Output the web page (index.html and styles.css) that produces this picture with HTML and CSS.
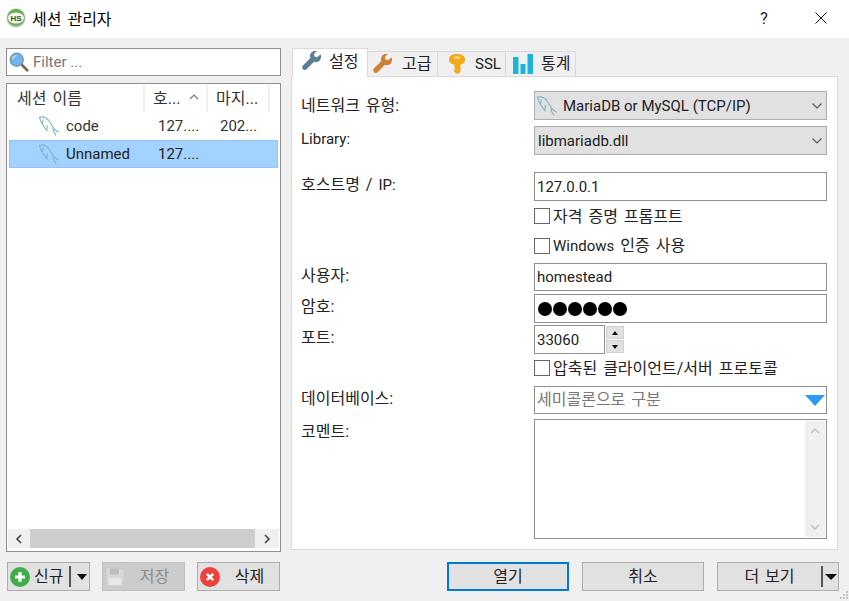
FILE: index.html
```html
<!DOCTYPE html>
<html lang="ko">
<head>
<meta charset="utf-8">
<title>세션 관리자</title>
<link rel="stylesheet" href="styles.css">
</head>
<body>
<svg class="defs" width="0" height="0" aria-hidden="true">
  <defs>
    <symbol id="dolphin" viewBox="0 0 20 20">
      <path d="M.5 1.200C4 .2 8 2 10.500 5.500c1.700 2.400 2.800 5 4.200 6.800 1.200 1.400 2.800 2.600 4.600 3.700M.5 1.200C1 4 2 6.500 3.500 8.500c1.300 2 3 4.300 4.500 6.300M3.500 8.500C3.300 6.500 3.600 5 4.500 3.700M8 14.800c-.2-1.800-.1-3.500.5-5M14.200 12c-.3 1.500 0 3 1 4.300.8 1 1.300 1.900 1.500 3" fill="none" stroke="#7fb5c4" stroke-width="1.100" stroke-linecap="round" stroke-linejoin="round"/>
    </symbol>
    <symbol id="wrench" viewBox="0 0 20 20">
      <path d="M18.500 3.200l-3.300 3-2.600-.7-.7-2.600 3-3C12.600-.7 10 .4 8.800 2.300c-1 1.500-1 3.200-.4 4.700L.9 14.500c-1 1-1 2.600 0 3.700 1 1.100 2.700 1 3.700 0L12 10.700c1.600.7 3.400.5 4.900-.5 1.900-1.300 2.800-4.300 1.600-7z"/>
    </symbol>
  </defs>
</svg>
<div class="window">
  <header class="titlebar">
    <svg class="app-icon" viewBox="0 0 20 20" aria-hidden="true">
      <circle cx="10" cy="10" r="9.500" fill="#b9c2b5"/>
      <circle cx="10" cy="9.500" r="8.500" fill="#6aaf50"/>
      <ellipse cx="10" cy="10" rx="8" ry="5.500" fill="#f4f4ef"/>
      <text x="10" y="13" class="app-icon-text" text-anchor="middle">HS</text>
    </svg>
    <span class="title">세션 관리자</span>
    <span class="help">?</span>
    <svg class="close" viewBox="0 0 12 12" aria-hidden="true"><path d="M.5.500l11 11M11.500.500l-11 11" stroke="#111" stroke-width="1" fill="none"/></svg>
  </header>

  <main class="content">
    <section class="left">
      <div class="filter">
        <svg class="search" viewBox="0 0 22 22" aria-hidden="true">
          <path d="M13.500 13.500l6.500 6.500" stroke="#6f6a60" stroke-width="3" stroke-linecap="round"/>
          <circle cx="8.500" cy="8.500" r="7" fill="#6bb7f2" stroke="#7f98a8" stroke-width="1.800"/>
          <path d="M4 8a4.500 4.500 0 0 1 4-4" stroke="#b9e0fb" stroke-width="1.500" fill="none"/>
        </svg>
        <span class="filter-text">Filter ...</span>
      </div>
      <div class="tree">
        <div class="tree-head">
          <span class="col col-name ko">세션 이름</span>
          <span class="col col-host ko">호...<svg class="sort" viewBox="0 0 10 6" aria-hidden="true"><path d="M1 5l4-4 4 4" fill="none" stroke="#777" stroke-width="1.200"/></svg></span>
          <span class="col col-last ko">마지...</span>
        </div>
        <div class="tree-row">
          <svg class="tree-icon"><use href="#dolphin"/></svg>
          <span class="cell-name">code</span><span class="cell-host">127....</span><span class="cell-last">202...</span>
        </div>
        <div class="tree-row selected">
          <svg class="tree-icon"><use href="#dolphin"/></svg>
          <span class="cell-name">Unnamed</span><span class="cell-host">127....</span>
        </div>
        <div class="tree-fill"></div>
        <div class="hscroll">
          <div class="scroll-btn scroll-btn-left"><svg class="scroll-arrow" viewBox="0 0 8 10" aria-hidden="true"><path d="M6 1L2 5l4 4" fill="none" stroke="#444" stroke-width="1.600"/></svg></div>
          <div class="hscroll-thumb"></div>
          <div class="scroll-btn scroll-btn-right"><svg class="scroll-arrow" viewBox="0 0 8 10" aria-hidden="true"><path d="M2 1l4 4-4 4" fill="none" stroke="#444" stroke-width="1.600"/></svg></div>
        </div>
      </div>
    </section>

    <section class="right">
      <nav class="tabs">
        <div class="tab active">
          <svg class="tab-icon wrench-blue"><use href="#wrench"/></svg><span class="ko">설정</span>
        </div>
        <div class="tab tab-adv">
          <svg class="tab-icon wrench-orange"><use href="#wrench"/></svg><span class="ko">고급</span>
        </div>
        <div class="tab tab-ssl">
          <svg class="tab-icon" viewBox="0 0 20 20" aria-hidden="true">
            <path d="M10 0c4.500 0 8 1.500 8 5.500 0 3.500-2.500 4.800-4.500 5.300V18l-3.500 2-3-2.500V16l1.200-1.200L7.500 13.500v-2.700C5 10.300 2 9 2 5.500 2 1.500 5.500 0 10 0z" fill="#f4a81c"/>
            <rect x="7" y="2.500" width="6" height="2.200" rx="1.100" fill="#ffe08a"/>
          </svg><span>SSL</span>
        </div>
        <div class="tab tab-stats">
          <svg class="tab-icon" viewBox="0 0 20 20" aria-hidden="true">
            <rect x="0" y="3" width="5.500" height="17" fill="#1cb5d8"/>
            <rect x="7.500" y="10" width="5" height="10" fill="#1cb5d8"/>
            <rect x="14.500" y="0" width="5.500" height="20" fill="#1cb5d8"/>
          </svg><span class="ko">통계</span>
        </div>
      </nav>
      <div class="panel">
        <div class="form">
          <label class="lbl ko row-net">네트워크 유형:</label>
          <div class="combo row-net">
            <svg class="combo-icon"><use href="#dolphin"/></svg>
            <span class="combo-text">MariaDB or MySQL (TCP/IP)</span>
            <svg class="chev" viewBox="0 0 10 6" aria-hidden="true"><path d="M.5.500L5 5 9.500.500" fill="none" stroke="#555" stroke-width="1.100"/></svg>
          </div>

          <label class="lbl row-lib">Library:</label>
          <div class="combo row-lib">
            <span class="combo-text">libmariadb.dll</span>
            <svg class="chev" viewBox="0 0 10 6" aria-hidden="true"><path d="M.5.500L5 5 9.500.500" fill="none" stroke="#555" stroke-width="1.100"/></svg>
          </div>

          <label class="lbl ko row-host">호스트명 / <span class="lat">IP:</span></label>
          <div class="input row-host">127.0.0.1</div>

          <div class="check ko row-c1"><span class="box"></span><span class="check-text">자격 증명 프롬프트</span></div>
          <div class="check ko row-c2"><span class="box"></span><span class="check-text"><span class="lat">Windows</span> 인증 사용</span></div>

          <label class="lbl ko row-user">사용자:</label>
          <div class="input row-user">homestead</div>

          <label class="lbl ko row-pass">암호:</label>
          <div class="input row-pass pass"><i></i><i></i><i></i><i></i><i></i><i></i></div>

          <label class="lbl ko row-port">포트:</label>
          <div class="port row-port">
            <div class="input port-input">33060</div>
            <div class="spin">
              <span class="spin-btn"><b class="tri-up"></b></span>
              <span class="spin-btn"><b class="tri-down"></b></span>
            </div>
          </div>

          <div class="check ko row-c3"><span class="box"></span><span class="check-text">압축된 클라이언트/서버 프로토콜</span></div>

          <label class="lbl ko row-db">데이터베이스:</label>
          <div class="input row-db db"><span class="ko db-text">세미콜론으로 구분</span><b class="db-arrow"></b></div>

          <label class="lbl ko row-comment">코멘트:</label>
          <div class="input row-comment memo">
            <div class="vscroll">
              <svg viewBox="0 0 10 6" aria-hidden="true"><path d="M1 5l4-4 4 4" fill="none" stroke="#c4c4c4" stroke-width="1.600"/></svg>
              <svg viewBox="0 0 10 6" aria-hidden="true"><path d="M1 1l4 4 4-4" fill="none" stroke="#c4c4c4" stroke-width="1.600"/></svg>
            </div>
          </div>
        </div>
      </div>
    </section>
  </main>

  <footer class="buttons">
    <div class="btn-group-left">
      <div class="btn btn-new">
        <svg class="btn-icon" viewBox="0 0 20 20" aria-hidden="true">
          <circle cx="10" cy="10" r="10" fill="#3fae49"/>
          <path d="M10 5v10M5 10h10" stroke="#fff" stroke-width="3.200"/>
        </svg>
        <span class="ko btn-text">신규</span>
        <span class="split"></span><b class="tri-down big"></b>
      </div>
      <div class="btn btn-save disabled">
        <svg class="btn-icon" viewBox="0 0 20 20" aria-hidden="true">
          <path d="M1 1h15l3 3v15H1z" fill="#d8d8d8" stroke="#c8c8c8"/>
          <rect x="5" y="1.500" width="9" height="6" fill="#bdbdbd"/>
          <rect x="4" y="11" width="12" height="7" fill="#e8e8e8"/>
        </svg>
        <span class="btn-label ko btn-text">저장</span>
      </div>
      <div class="btn btn-del">
        <svg class="btn-icon" viewBox="0 0 20 20" aria-hidden="true">
          <circle cx="10" cy="10" r="10" fill="#f0403c"/>
          <path d="M6.800 6.800l6.400 6.400M13.200 6.800l-6.400 6.400" stroke="#fff" stroke-width="2.600"/>
        </svg>
        <span class="btn-label ko btn-text">삭제</span>
      </div>
    </div>
    <div class="btn-group-right">
      <div class="btn wide default"><span class="ko btn-text">열기</span></div>
      <div class="btn wide"><span class="ko btn-text">취소</span></div>
      <div class="btn wide more"><span class="btn-label ko btn-text">더 보기</span><span class="split"></span><b class="tri-down big"></b></div>
    </div>
  </footer>
  <svg class="grip" viewBox="0 0 10 10" aria-hidden="true"><path d="M7 1h2v2H7zM4 4h2v2H4zM7 4h2v2H7zM1 7h2v2H1zM4 7h2v2H4zM7 7h2v2H7z" fill="#c4c4c4"/></svg>
</div>
</body>
</html>
```
FILE: styles.css
```css
* { box-sizing: border-box; }

html, body {
  margin: 0;
  padding: 0;
  height: 100%;
  overflow: hidden;
}

body {
  font-family: Roboto, "Noto Sans CJK KR", sans-serif;
  font-size: 15px;
  color: #1e1e1e;
  background: #f0f0f0;
}

.ko { font-size: 16px; word-spacing: 2px; white-space: nowrap; }
.lat { font-size: 15px; }

.defs { position: absolute; }

.window {
  position: relative;
  width: 849px;
  height: 601px;
  display: flex;
  flex-direction: column;
}

.titlebar {
  height: 38px;
  flex: none;
  background: #fff;
  display: flex;
  align-items: center;
  padding: 0 0 2px 6px;
}

.app-icon { width: 20px; height: 20px; margin-right: 6px; flex: none; }
.app-icon-text { font: bold 8px "Liberation Sans", sans-serif; fill: #2d5a2a; }
.title { font-size: 16px; color: #000; word-spacing: 2px; }
.help { margin-left: auto; width: 16px; font-size: 16px; color: #222; text-align: center; }
.close { width: 12px; height: 12px; margin: 0 22px 0 43px; }

.content {
  flex: none;
  height: 514px;
  padding: 10px 11px 0 6px;
  display: flex;
  gap: 10px;
}

.left {
  width: 275px;
  display: flex;
  flex-direction: column;
  gap: 7px;
}

.filter {
  height: 28px;
  flex: none;
  background: #fff;
  border: 1px solid #8f8f8f;
  display: flex;
  align-items: center;
  padding-left: 2px;
  padding-bottom: 1px;
}
.search { width: 20px; height: 20px; margin-right: 4px; }
.filter-text { color: #777; }

.tree {
  flex: 1;
  min-height: 0;
  background: #fff;
  border: 1px solid #8f8f8f;
  padding: 1px;
  display: flex;
  flex-direction: column;
}

.tree-head {
  height: 27px;
  display: flex;
  flex: none;
  color: #333;
}
.col {
  display: flex;
  align-items: center;
  border-right: 2px solid #f0f0f0;
  padding-bottom: 3px;
}
.col-name { width: 137px; padding-left: 9px; }
.col-host { width: 63px; padding-left: 8px; }
.col-last { width: 62px; padding-left: 8px; }
.sort { width: 10px; height: 6px; margin-left: 9px; }

.tree-row {
  height: 28px;
  margin: 0 1px;
  display: flex;
  align-items: center;
  flex: none;
  border: 1px solid transparent;
  color: #333;
}
.tree-row.selected {
  background: #a2d2fd;
  border-color: #8fc6f5;
  color: #222;
}
.tree-icon { width: 20px; height: 20px; margin-left: 29px; margin-right: 7px; flex: none; }
.cell-name { width: 92px; }
.cell-host { width: 62px; }

.tree-fill { flex: 1; }

.hscroll {
  height: 19px;
  margin-bottom: 2px;
  flex: none;
  background: #f0f0f0;
  display: flex;
  align-items: center;
}
.scroll-btn { height: 100%; display: flex; align-items: center; justify-content: center; flex: none; }
.scroll-btn-left { width: 22px; }
.scroll-btn-right { width: 24px; }
.scroll-arrow { width: 8px; height: 10px; }
.hscroll-thumb { flex: 1; height: 100%; background: #cdcdcd; }

.right {
  width: 547px;
  height: 502px;
  display: flex;
  flex-direction: column;
}

.tabs {
  display: flex;
  align-items: flex-end;
  height: 29px;
  flex: none;
  padding-left: 1px;
  position: relative;
  z-index: 1;
  margin-bottom: -1px;
}

.tab {
  height: 26px;
  padding: 0 0 1px 5px;
  display: flex;
  align-items: center;
  gap: 9px;
  background: #f0f0f0;
  border: 1px solid #d9d9d9;
  border-left: 0;
  color: #222;
}
.tab .ko { padding-bottom: 3px; }
.tab.active {
  width: 76px;
  height: 29px;
  background: #fff;
  border: 1px solid #d9d9d9;
  border-bottom: 0;
  padding: 0 0 4px 9px;
  gap: 7px;
}
.tab-adv { width: 70px; }
.tab-ssl { width: 68px; padding-left: 9px; gap: 8px; }
.tab-stats { width: 70px; padding-left: 7px; gap: 8px; }
.tab-icon { width: 20px; height: 20px; flex: none; }
.wrench-blue { fill: #5d7f93; }
.wrench-orange { fill: #cf7f2f; }

.panel {
  flex: 1;
  min-height: 0;
  background: #fff;
  border: 1px solid #d9d9d9;
  padding: 14px 10px 0 9px;
}

.form {
  display: grid;
  grid-template-columns: 233px 293px;
  grid-template-rows: 29px 6px 29px 17px 29px 30px 29px 3px 28px 3px 29px 2px 29px 28px 4px 28px 5px 120px;
  align-items: center;
}

.lbl { grid-column: 1; color: #222; align-self: start; line-height: 24px; padding-top: 1px; }
.lbl.row-net { padding-top: 3px; }
.lbl.row-lib { padding-top: 1px; }

.row-net { grid-row: 1; }
.row-lib { grid-row: 3; }
.row-host { grid-row: 5; }
.row-c1 { grid-row: 6; grid-column: 2; }
.row-c2 { grid-row: 7; grid-column: 2; }
.row-user { grid-row: 9; }
.row-pass { grid-row: 11; }
.row-port { grid-row: 13; }
.row-c3 { grid-row: 14; grid-column: 2; }
.row-db { grid-row: 16; }
.row-comment { grid-row: 18; }

.combo {
  grid-column: 2;
  height: 100%;
  background: #e1e1e1;
  border: 1px solid #adadad;
  display: flex;
  align-items: center;
  padding: 0 4px 0 2px;
  color: #222;
}
.combo-icon { width: 20px; height: 20px; margin-right: 6px; flex: none; }
.combo-text { flex: 1; }
.row-lib .combo-text { padding-left: 1px; }
.chev { width: 10px; height: 6px; flex: none; }

.input {
  grid-column: 2;
  height: 100%;
  background: #fff;
  border: 1px solid #8f8f8f;
  display: flex;
  align-items: center;
  padding-left: 2px;
  color: #222;
}

.pass { gap: 1px; padding-left: 3px; }
.pass i { width: 14px; height: 14px; border-radius: 50%; background: #000; }

.port { grid-column: 2; height: 100%; display: flex; }
.port-input { width: 71px; }
.spin { display: flex; flex-direction: column; gap: 1px; margin-left: 1px; padding-top: 1px; }
.spin-btn {
  width: 18px;
  height: 13px;
  background: #e1e1e1;
  border: 1px solid #d0d0d0;
  display: flex;
  align-items: center;
  justify-content: center;
}

.tri-up, .tri-down {
  display: block;
  width: 0;
  height: 0;
  border-left: 3.500px solid transparent;
  border-right: 3.500px solid transparent;
}
.tri-up { border-bottom: 4px solid #111; }
.tri-down { border-top: 4px solid #111; }
.tri-down.big { border-left-width: 6px; border-right-width: 6px; border-top-width: 6px; flex: none; }

.check { display: flex; align-items: center; gap: 3px; color: #222; }
.check-text { padding-bottom: 3px; }
.box { width: 16px; height: 16px; background: #fff; border: 1px solid #666; flex: none; }

.db { justify-content: space-between; padding-right: 1px; color: #777; }
.db-text { padding-bottom: 4px; }
.db-arrow {
  width: 0;
  height: 0;
  border-left: 10px solid transparent;
  border-right: 10px solid transparent;
  border-top: 11px solid #2b9af3;
  flex: none;
}

.memo { height: 120px; align-items: stretch; justify-content: flex-end; padding: 1px; }
.vscroll {
  width: 20px;
  background: #f0f0f0;
  display: flex;
  flex-direction: column;
  justify-content: space-between;
  align-items: center;
  padding: 7px 0;
}
.vscroll svg { width: 10px; height: 6px; }

.buttons {
  flex: none;
  padding: 10px 10px 0 7px;
  display: flex;
  justify-content: space-between;
}

.btn-group-left { display: flex; gap: 12px; }
.btn-group-right { display: flex; gap: 13px; }

.btn {
  height: 29px;
  background: #e1e1e1;
  border: 1px solid #adadad;
  display: flex;
  align-items: center;
  justify-content: center;
  color: #222;
}
.btn-text { padding-bottom: 4px; }
.btn-new, .btn-save, .btn-del { width: 83px; }
.btn-new { padding: 0 2px 0 2px; justify-content: flex-start; gap: 4px; }
.btn-new .btn-text { flex: none; }
.btn-new .tri-down.big { border-left-width: 5.500px; border-right-width: 5.500px; }
.btn-save, .btn-del { padding-left: 2px; justify-content: flex-start; }
.btn-label { flex: 1; text-align: center; }
.btn-icon { width: 20px; height: 20px; flex: none; }
.disabled { background: #cccccc; border-color: #bfbfbf; color: #8a8a8a; }

.split { width: 2px; height: 21px; background: #555; margin: 0 2px 0 auto; flex: none; }

.wide { width: 122px; }
.default { border: 2px solid #0078d7; }
.more { padding: 0 1px 0 0; justify-content: flex-start; }
.more .split { margin-left: 0; }

.grip { position: absolute; right: 0; bottom: 1px; width: 10px; height: 10px; }
```
